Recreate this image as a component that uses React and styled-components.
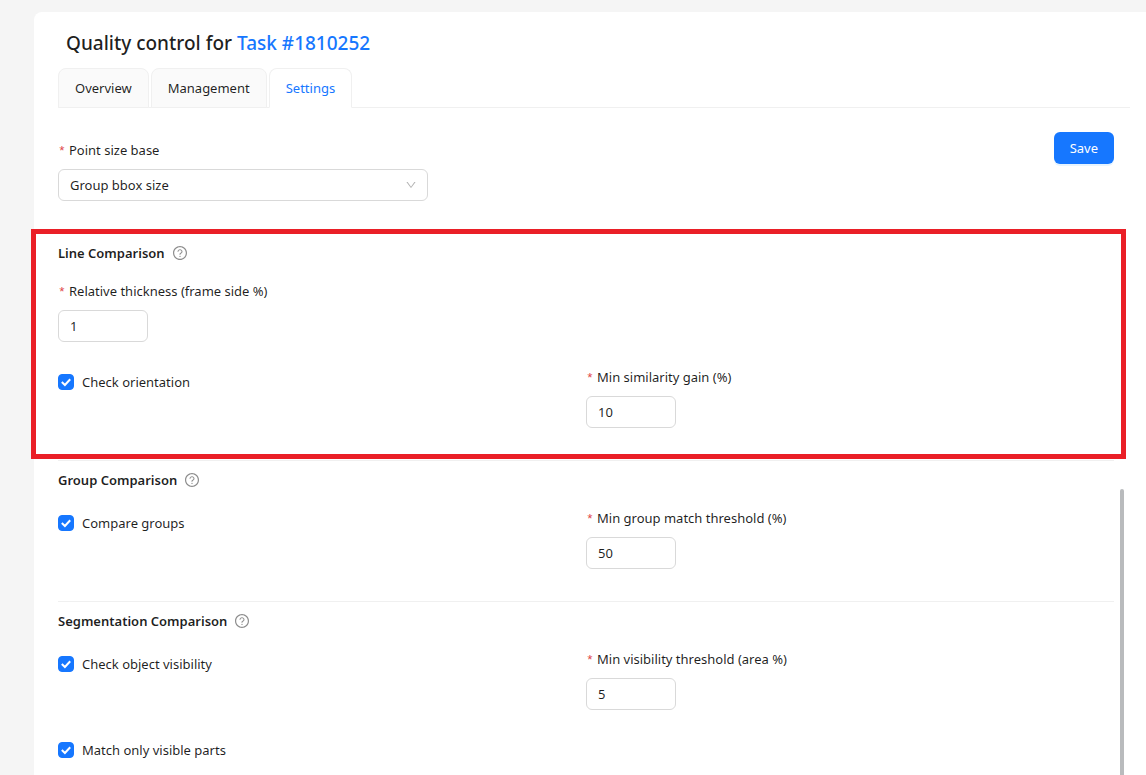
import { useState } from "react";
import styled, { createGlobalStyle, css } from "styled-components";
import { AiOutlineDown, AiOutlineQuestionCircle } from "react-icons/ai";

const GlobalStyle = createGlobalStyle`
  :root {
    --primary: #1677ff;
    --text: rgba(0, 0, 0, 0.88);
    --textSecondary: rgba(0, 0, 0, 0.45);
    --border: #d9d9d9;
    --split: #f0f0f0;
    --required: #e0474a;
    --highlight: #ea1f27;
  }

  *, *::before, *::after {
    box-sizing: border-box;
  }

  body {
    margin: 0;
    background: #f5f5f5;
    color: var(--text);
    font-family: "Noto Sans", "Open Sans", sans-serif;
    font-size: 13px;
    line-height: 22px;
  }

  button, input, select {
    font: inherit;
    color: inherit;
  }
`;

const Page = styled.div`
  height: 100vh;
  padding: 12px 0 0 34px;
  overflow-x: hidden;
  overflow-y: auto;
  scrollbar-width: none;
`;

const Card = styled.main`
  min-height: 100%;
  padding: 15px 16px 0 24px;
  background: #fff;
  border-top-left-radius: 8px;
`;

const Title = styled.h1`
  margin: 0;
  padding: 0 8px 9px;
  font-size: 19px;
  font-weight: 500;
  line-height: 32px;

  a {
    color: var(--primary);
    text-decoration: none;
  }
`;

const Tabs = styled.div`
  display: flex;
  gap: 2px;
  border-bottom: 1px solid var(--split);
`;

const Tab = styled.button`
  height: 40px;
  margin-bottom: -1px;
  padding: 0 16px;
  background: #fafafa;
  border: 1px solid var(--split);
  border-radius: 8px 8px 0 0;
  cursor: pointer;

  ${({ $active }) =>
    $active &&
    css`
      background: #fff;
      border-bottom-color: #fff;
      color: var(--primary);
    `}
`;

const Form = styled.form`
  padding: 24px 16px 0 0;
`;

const TopRow = styled.div`
  display: flex;
  justify-content: space-between;
  align-items: flex-start;
`;

const SaveButton = styled.button`
  height: 32px;
  padding: 0 16px;
  background: var(--primary);
  border: none;
  border-radius: 6px;
  box-shadow: 0 2px 0 rgba(5, 145, 255, 0.1);
  color: #fff;
  cursor: pointer;
`;

const Section = styled.section`
  position: relative;
  padding: 8px 0;
  border-top: 1px solid var(--split);

  ${({ $highlighted }) =>
    $highlighted &&
    css`
      &::after {
        content: "";
        position: absolute;
        inset: -5px -12px 1px -27px;
        border: 5px solid var(--highlight);
        pointer-events: none;
      }
    `}
`;

const SectionTitle = styled.h2`
  display: flex;
  align-items: center;
  gap: 7px;
  margin: 0 0 16px;
  font-size: 13px;
  font-weight: 600;
  line-height: 22px;

  svg {
    color: var(--textSecondary);
    font-size: 16px;
  }
`;

const Row = styled.div`
  display: grid;
  grid-template-columns: repeat(2, 1fr);
`;

const Field = styled.div`
  display: flex;
  flex-direction: column;
  align-items: flex-start;
  gap: 8px;
  margin-bottom: 24px;
`;

const TopField = styled(Field)`
  width: 35%;
  margin: 7px 0 32px;
`;

const Label = styled.label`
  display: flex;
  gap: 4px;
  height: 22px;

  &::before {
    content: "*";
    width: 7px;
    padding-top: 2px;
    color: var(--required);
    font-family: "Liberation Mono", monospace;
  }
`;

const NumberInput = styled.input`
  width: 90px;
  height: 32px;
  padding: 0 11px;
  background: #fff;
  border: 1px solid var(--border);
  border-radius: 6px;
`;

const SelectBox = styled.div`
  position: relative;
  width: 100%;

  select {
    display: block;
    width: 100%;
    height: 32px;
    padding: 0 11px;
    appearance: none;
    background: #fff;
    border: 1px solid var(--border);
    border-radius: 6px;
  }

  svg {
    position: absolute;
    top: 10px;
    right: 11px;
    color: rgba(0, 0, 0, 0.3);
    font-size: 12px;
    pointer-events: none;
  }
`;

const CheckLabel = styled.label`
  display: flex;
  align-items: center;
  gap: 8px;
  height: 32px;
  margin-bottom: 24px;
  cursor: pointer;
`;

const CheckBox = styled.span`
  display: grid;
  width: 16px;
  height: 16px;

  input,
  svg {
    grid-area: 1 / 1;
    width: 16px;
    height: 16px;
    margin: 0;
  }

  input {
    appearance: none;
    border: 1px solid var(--border);
    border-radius: 4px;
  }

  input:checked {
    background: var(--primary);
    border-color: var(--primary);
  }

  svg {
    visibility: hidden;
    pointer-events: none;
  }

  input:checked + svg {
    visibility: visible;
  }
`;

const ScrollThumb = styled.div`
  position: fixed;
  top: 489px;
  right: 22px;
  bottom: 0;
  width: 4px;
  background: #b9bbbd;
  border-radius: 2px 2px 0 0;
`;

const Check = ({ children }) => (
  <CheckLabel>
    <CheckBox>
      <input type="checkbox" defaultChecked />
      <svg viewBox="0 0 16 16" fill="none" stroke="#fff" strokeWidth="2">
        <path d="M3.8 8.1 L6.9 11 L12.2 5.3" />
      </svg>
    </CheckBox>
    {children}
  </CheckLabel>
);

const NumberField = ({ id, label, value }) => (
  <Field>
    <Label htmlFor={id}>{label}</Label>
    <NumberInput id={id} type="text" inputMode="numeric" defaultValue={value} />
  </Field>
);

const Heading = ({ children }) => (
  <SectionTitle>
    {children}
    <AiOutlineQuestionCircle />
  </SectionTitle>
);

const tabs = ["Overview", "Management", "Settings"];

const App = () => {
  const [active, setActive] = useState("Settings");

  return (
    <Page>
      <GlobalStyle />
      <Card>
        <Title>
          Quality control for <a href="#task">Task #1810252</a>
        </Title>
        <Tabs role="tablist">
          {tabs.map((tab) => (
            <Tab
              key={tab}
              type="button"
              role="tab"
              aria-selected={tab === active}
              $active={tab === active}
              onClick={() => setActive(tab)}
            >
              {tab}
            </Tab>
          ))}
        </Tabs>
        <Form onSubmit={(e) => e.preventDefault()}>
          <TopRow>
            <TopField>
              <Label htmlFor="point-size">Point size base</Label>
              <SelectBox>
                <select id="point-size" defaultValue="group">
                  <option value="group">Group bbox size</option>
                </select>
                <AiOutlineDown />
              </SelectBox>
            </TopField>
            <SaveButton type="submit">Save</SaveButton>
          </TopRow>

          <Section $highlighted>
            <Heading>Line Comparison</Heading>
            <NumberField
              id="thickness"
              label="Relative thickness (frame side %)"
              value="1"
            />
            <Row>
              <Check>Check orientation</Check>
              <NumberField
                id="similarity"
                label="Min similarity gain (%)"
                value="10"
              />
            </Row>
          </Section>

          <Section>
            <Heading>Group Comparison</Heading>
            <Row>
              <Check>Compare groups</Check>
              <NumberField
                id="group-match"
                label="Min group match threshold (%)"
                value="50"
              />
            </Row>
          </Section>

          <Section>
            <Heading>Segmentation Comparison</Heading>
            <Row>
              <Check>Check object visibility</Check>
              <NumberField
                id="visibility"
                label="Min visibility threshold (area %)"
                value="5"
              />
            </Row>
            <Check>Match only visible parts</Check>
          </Section>
        </Form>
      </Card>
      <ScrollThumb />
    </Page>
  );
};

export default App;
